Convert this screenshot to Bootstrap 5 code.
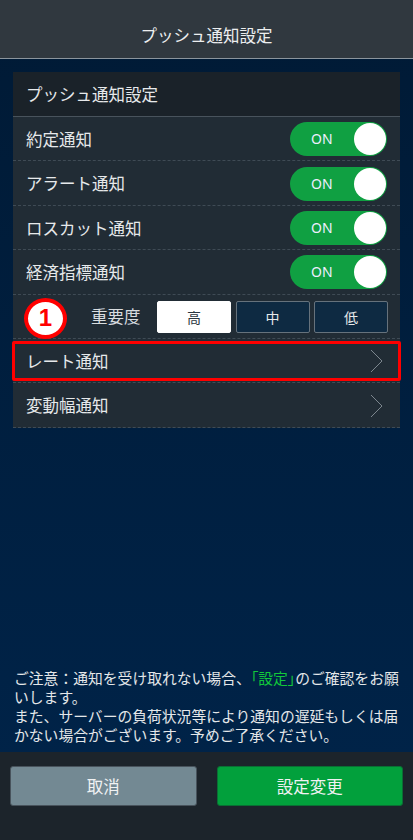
<!DOCTYPE html>
<html lang="ja">
<head>
<meta charset="utf-8">
<title>プッシュ通知設定</title>
<link href="https://cdn.jsdelivr.net/npm/bootstrap@5.3.0/dist/css/bootstrap.min.css" rel="stylesheet">
<style>
html,body{height:100%;margin:0}
body{font-family:"Noto Sans CJK JP","Liberation Sans",sans-serif;background:#001a36;color:#e6e9eb;overflow:hidden}
.screen{height:840px;width:413px;background:linear-gradient(180deg,#001a35 0%,#00244a 100%)}
.topbar{height:59px;background:#30383f;border-bottom:1px solid #8b949c;font-size:16.5px;padding-top:24px;line-height:22px;color:#eceeef}
.panel{margin:13px 13px 0;width:387px;background:#212c35;border-radius:3px 3px 0 0}
.panel-head{height:45px;background:#1a2229;border-bottom:1px solid #48535c;padding:0 13px;font-size:16.5px}
.item{height:44.4px;padding:1px 13px 0;font-size:16.5px;border-bottom:1px dashed #3f4b55;position:relative}
.switcher{width:97px;height:34px;border-radius:17px;background:#10a042;color:#eef;font-size:14px;position:relative;padding-left:21px;line-height:34px;font-family:"Noto Sans","Liberation Sans",sans-serif}
.switcher::after{content:"";position:absolute;right:1px;top:1px;width:32px;height:32px;border-radius:50%;background:#fff}
.seg-group{gap:4.5px}
.seg{width:74px;height:32px;padding:0;font-size:14px;line-height:30px;border:1px solid #66727c;border-radius:2px;background:#0e2a42;color:#e6e9eb}
.seg.on{background:#fff;color:#2b3640;border-color:#fff}
.importance{font-size:16.5px;white-space:nowrap;margin-left:65px;color:#d9dde0}
.row-importance{padding-right:12px}
.marker{position:absolute;left:11px;top:3px;width:43px;height:41px;border-radius:50%;background:#fff;border:4px solid #f00;color:#f00;font-size:24px;font-weight:700;line-height:32px;text-align:center;font-family:"Liberation Sans",sans-serif}
.hilite{position:absolute;left:-1px;top:2px;right:-1px;bottom:1px;border:3px solid #f00;border-radius:2px}
.chev{display:block;margin-right:4px}
.note{position:absolute;left:14px;width:388px;top:668px;font-size:14.8px;line-height:19px;color:#e4e7e9}
.note em{font-style:normal;color:#12c93a;font-feature-settings:"palt"}
.foot{position:absolute;left:0;right:0;top:752px;height:88px;background:#1c242b;padding:14px 10px 0}
.act{width:186.5px;height:40px;padding:0;border-radius:3px;font-size:16.5px;color:#f0f2f3;line-height:36px}
.act-a{background:#738993;border:1px solid #48535c}
.act-b{background:#02a03c;border:1px solid #0a6f34}
.act:hover{color:#f0f2f3}
</style>
</head>
<body>
<div class="screen position-relative">
  <header class="topbar text-center">プッシュ通知設定</header>
  <section class="panel">
    <div class="panel-head d-flex align-items-center">プッシュ通知設定</div>
    <div class="item d-flex align-items-center justify-content-between"><span>約定通知</span><span class="switcher">ON</span></div>
    <div class="item d-flex align-items-center justify-content-between"><span>アラート通知</span><span class="switcher">ON</span></div>
    <div class="item d-flex align-items-center justify-content-between"><span>ロスカット通知</span><span class="switcher">ON</span></div>
    <div class="item d-flex align-items-center justify-content-between"><span>経済指標通知</span><span class="switcher">ON</span></div>
    <div class="item row-importance d-flex align-items-center">
      <span class="marker">1</span>
      <span class="importance">重要度</span>
      <div class="d-flex seg-group ms-auto">
        <button type="button" class="btn seg on">高</button>
        <button type="button" class="btn seg">中</button>
        <button type="button" class="btn seg">低</button>
      </div>
    </div>
    <div class="item d-flex align-items-center justify-content-between"><span class="hilite"></span><span>レート通知</span>
      <svg class="chev" width="13" height="24" viewBox="0 0 13 24" fill="none" stroke="#7c868e" stroke-width="1"><path d="M1 1 12 12 1 23"/></svg></div>
    <div class="item d-flex align-items-center justify-content-between"><span>変動幅通知</span>
      <svg class="chev" width="13" height="24" viewBox="0 0 13 24" fill="none" stroke="#7c868e" stroke-width="1"><path d="M1 1 12 12 1 23"/></svg></div>
  </section>
  <p class="note m-0">ご注意：通知を受け取れない場合、<em>「設定」</em>のご確認をお願いします。<br>また、サーバーの負荷状況等により通知の遅延もしくは届かない場合がございます。予めご了承ください。</p>
  <footer class="foot d-flex justify-content-between">
    <button type="button" class="btn act act-a">取消</button>
    <button type="button" class="btn act act-b">設定変更</button>
  </footer>
</div>
<script src="https://cdn.jsdelivr.net/npm/bootstrap@5.3.0/dist/js/bootstrap.bundle.min.js"></script>
</body>
</html>
